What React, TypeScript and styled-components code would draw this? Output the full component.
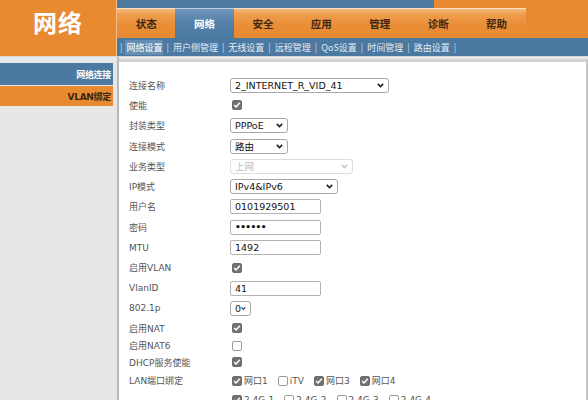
import React from "react";
import styled, { createGlobalStyle } from "styled-components";

const GlobalStyle = createGlobalStyle`
  html, body {
    margin: 0;
    padding: 0;
  }
  body {
    width: 588px;
    height: 400px;
    overflow: hidden;
    background: #e6e7e7;
    font-family: "DejaVu Sans", "Noto Sans CJK SC", sans-serif;
  }
`;

const ORANGE = "#e88a30";
const BLUE = "#4b79a2";

const Page = styled.div`
  display: flex;
  flex-direction: column;
  width: 588px;
  height: 400px;
  overflow: hidden;
`;

const Header = styled.div`
  display: flex;
  height: 56px;
  background: ${ORANGE};
`;

const Logo = styled.div`
  width: 117px;
  border-right: 1px solid rgba(255, 230, 200, 0.6);
  color: #fff;
  font-family: "Noto Sans CJK SC", sans-serif;
  font-weight: 700;
  font-size: 24px;
  line-height: 24px;
  padding-top: 10px;
  box-sizing: border-box;
  text-align: center;
  letter-spacing: 1px;
`;

const HeaderRight = styled.div`
  flex: 1;
  display: flex;
  flex-direction: column;
`;

const TopStrip = styled.div`
  height: 8px;
  display: flex;
`;

const TopBlue = styled.div`
  width: 317px;
  background: #50799f;
`;

const TabRow = styled.div`
  height: 30px;
  display: flex;
`;

const Tab = styled.div<{ $active?: boolean }>`
  width: 58.4px;
  display: flex;
  align-items: center;
  justify-content: center;
  font-family: "Noto Sans CJK SC", sans-serif;
  font-weight: 700;
  font-size: 10.5px;
  color: ${(p) => (p.$active ? "#ffffff" : "#3b2812")};
  background: ${(p) =>
    p.$active
      ? "linear-gradient(#7197bb 0%, #5681aa 45%, #4b79a2 100%)"
      : "linear-gradient(#f6c08a 0%, #ee9c4c 22%, #e98d36 60%, #e88a30 100%)"};
  box-shadow: inset 0 1px 0 rgba(255, 255, 255, 0.55);
`;

const SubNav = styled.div`
  height: 18px;
  background: ${BLUE};
  display: flex;
  align-items: center;
  padding-left: 0;
  font-family: "Noto Sans CJK SC", sans-serif;
  font-size: 9px;
  color: #e6edf5;
  white-space: nowrap;
`;

const SubSep = styled.span`
  color: #cfdbe8;
  padding: 0 3px;
`;

const SubItem = styled.span<{ $active?: boolean }>`
  padding: 1px 1px;
  color: ${(p) => (p.$active ? "#ffffff" : "#e3ebf3")};
  background: ${(p) => (p.$active ? "rgba(255,255,255,0.16)" : "transparent")};
`;

const Body = styled.div`
  flex: 1;
  display: flex;
  border-top: 1px solid #d8d8d8;
  min-height: 0;
`;

const Sidebar = styled.div`
  width: 117px;
  padding-top: 6px;
  display: flex;
  flex-direction: column;
  gap: 1px;
  border-right: 2px solid #b9b9b9;
`;

const SideItem = styled.div<{ $active?: boolean }>`
  width: 113px;
  height: ${(p) => (p.$active ? 22 : 20)}px;
  box-sizing: border-box;
  padding-right: 2px;
  display: flex;
  align-items: center;
  justify-content: flex-end;
  overflow: hidden;
  white-space: nowrap;
  font-family: "DejaVu Sans", "Noto Sans CJK SC", sans-serif;
  font-weight: 700;
  font-size: 9px;
  letter-spacing: -0.3px;
  color: ${(p) => (p.$active ? "#ffffff" : "#3a2612")};
  background: ${(p) => (p.$active ? BLUE : ORANGE)};
`;

const Content = styled.div`
  flex: 1;
  margin-top: 2px;
  background: #ffffff;
  border-top: 3px solid #d2d2d2;
  border-right: 2px solid #c6c6c6;
  padding: 13px 0 0 10px;
  overflow: hidden;
`;

const Form = styled.div`
  display: flex;
  flex-direction: column;
`;

const Row = styled.div<{ $h: number }>`
  height: ${(p) => p.$h}px;
  flex-shrink: 0;
  display: flex;
  align-items: center;
`;

const Label = styled.div`
  width: 101px;
  flex-shrink: 0;
  font-size: 9px;
  color: #555555;
  white-space: nowrap;
`;

const Field = styled.div`
  display: flex;
  align-items: center;
`;

const SelectBox = styled.div<{ $w: number; $disabled?: boolean }>`
  width: ${(p) => p.$w}px;
  height: 15px;
  box-sizing: border-box;
  border: 1px solid ${(p) => (p.$disabled ? "#dddddd" : "#a8a8a8")};
  border-radius: 3px;
  background: #fff;
  display: flex;
  align-items: center;
  justify-content: space-between;
  padding: 0 4px 0 4px;
  font-size: 9.5px;
  color: ${(p) => (p.$disabled ? "#bdbdbd" : "#111111")};
  white-space: nowrap;
`;

const TextBox = styled.div`
  width: 91px;
  height: 15px;
  box-sizing: border-box;
  border: 1px solid #b4b4b4;
  border-radius: 2px;
  background: #fff;
  display: flex;
  align-items: center;
  padding-left: 4px;
  font-size: 9.5px;
  color: #111111;
`;

const Dots = styled.span`
  font-size: 9px;
  font-weight: 700;
  letter-spacing: -0.6px;
`;

const Box = styled.span<{ $checked: boolean }>`
  display: inline-flex;
  align-items: center;
  justify-content: center;
  width: 10px;
  height: 10px;
  box-sizing: border-box;
  border-radius: 2px;
  margin-left: 2px;
  border: 1px solid ${(p) => (p.$checked ? "#6c6c6c" : "#9c9c9c")};
  background: ${(p) => (p.$checked ? "#727272" : "#ffffff")};
  flex-shrink: 0;
`;

const Option = styled.span`
  display: inline-flex;
  align-items: center;
  margin-right: 8px;
  font-size: 9px;
  color: #555555;
`;

const OptionText = styled.span`
  margin-left: 2px;
`;

const Chevron = ({ color = "#222" }: { color?: string }) => (
  <svg width="7" height="5" viewBox="0 0 7 5">
    <path d="M0.8 0.9 L3.5 3.6 L6.2 0.9" stroke={color} strokeWidth="1.6" fill="none" />
  </svg>
);

const Check = ({ checked }: { checked: boolean }) => (
  <Box $checked={checked}>
    {checked && (
      <svg width="8" height="8" viewBox="0 0 8 8">
        <path d="M1.2 4.1 L3.1 6 L6.8 1.8" stroke="#fff" strokeWidth="1.5" fill="none" />
      </svg>
    )}
  </Box>
);

const Select = ({ w, value, disabled }: { w: number; value: string; disabled?: boolean }) => (
  <SelectBox $w={w} $disabled={disabled}>
    <span>{value}</span>
    <Chevron color={disabled ? "#c8c8c8" : "#222"} />
  </SelectBox>
);

const tabs = ["状态", "网络", "安全", "应用", "管理", "诊断", "帮助"];
const subs = ["网络设置", "用户侧管理", "无线设置", "远程管理", "QoS设置", "时间管理", "路由设置"];

const lanPorts = [
  { name: "网口1", on: true },
  { name: "iTV", on: false },
  { name: "网口3", on: true },
  { name: "网口4", on: true },
];

const wifiPorts = [
  { name: "2.4G-1", on: true },
  { name: "2.4G-2", on: false },
  { name: "2.4G-3", on: false },
  { name: "2.4G-4", on: false },
];

const R = 20.3;

const App: React.FC = () => {
  return (
    <Page>
      <GlobalStyle />
      <Header>
        <Logo>网络</Logo>
        <HeaderRight>
          <TopStrip>
            <TopBlue />
          </TopStrip>
          <TabRow>
            {tabs.map((t) => (
              <Tab key={t} $active={t === "网络"}>
                {t}
              </Tab>
            ))}
          </TabRow>
          <SubNav>
            <SubSep>|</SubSep>
            {subs.map((s, i) => (
              <React.Fragment key={s}>
                <SubItem $active={i === 0}>{s}</SubItem>
                <SubSep>|</SubSep>
              </React.Fragment>
            ))}
          </SubNav>
        </HeaderRight>
      </Header>
      <Body>
        <Sidebar>
          <SideItem $active>网络连接</SideItem>
          <SideItem>VLAN绑定</SideItem>
        </Sidebar>
        <Content>
          <Form>
            <Row $h={R}>
              <Label>连接名称</Label>
              <Select w={159} value="2_INTERNET_R_VID_41" />
            </Row>
            <Row $h={R}>
              <Label>使能</Label>
              <Check checked />
            </Row>
            <Row $h={R}>
              <Label>封装类型</Label>
              <Select w={58} value="PPPoE" />
            </Row>
            <Row $h={R}>
              <Label>连接模式</Label>
              <Select w={58} value="路由" />
            </Row>
            <Row $h={R}>
              <Label>业务类型</Label>
              <Select w={123} value="上网" disabled />
            </Row>
            <Row $h={R}>
              <Label>IP模式</Label>
              <Select w={108} value="IPv4&IPv6" />
            </Row>
            <Row $h={R}>
              <Label>用户名</Label>
              <TextBox>0101929501</TextBox>
            </Row>
            <Row $h={R}>
              <Label>密码</Label>
              <TextBox>
                <Dots>••••••</Dots>
              </TextBox>
            </Row>
            <Row $h={R}>
              <Label>MTU</Label>
              <TextBox>1492</TextBox>
            </Row>
            <Row $h={R}>
              <Label>启用VLAN</Label>
              <Check checked />
            </Row>
            <Row $h={R}>
              <Label>VlanID</Label>
              <TextBox>41</TextBox>
            </Row>
            <Row $h={R}>
              <Label>802.1p</Label>
              <Select w={21} value="0" />
            </Row>
            <Row $h={19}>
              <Label>启用NAT</Label>
              <Check checked />
            </Row>
            <Row $h={16.5}>
              <Label>启用NAT6</Label>
              <Check checked={false} />
            </Row>
            <Row $h={16.5}>
              <Label>DHCP服务使能</Label>
              <Check checked />
            </Row>
            <Row $h={20}>
              <Label>LAN端口绑定</Label>
              <Field>
                {lanPorts.map((p) => (
                  <Option key={p.name}>
                    <Check checked={p.on} />
                    <OptionText>{p.name}</OptionText>
                  </Option>
                ))}
              </Field>
            </Row>
            <Row $h={18}>
              <Label />
              <Field>
                {wifiPorts.map((p) => (
                  <Option key={p.name}>
                    <Check checked={p.on} />
                    <OptionText>{p.name}</OptionText>
                  </Option>
                ))}
              </Field>
            </Row>
          </Form>
        </Content>
      </Body>
    </Page>
  );
};

export default App;
